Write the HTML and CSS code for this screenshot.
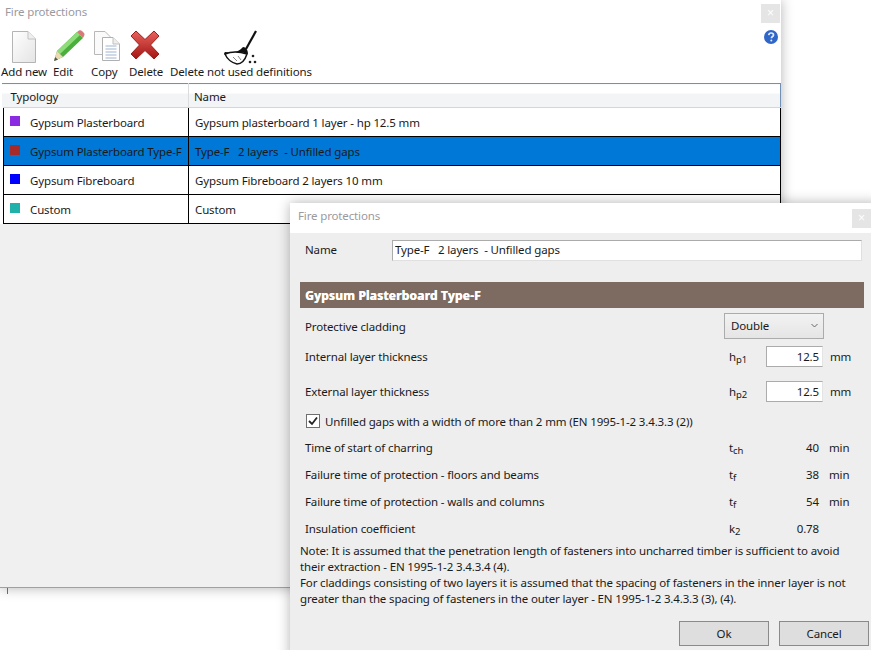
FILE: index.html
```html
<!DOCTYPE html>
<html lang="en">

<head>
    <meta charset="UTF-8">
    <title>Fire protections</title>
    <link rel="stylesheet" href="styles.css">
</head>

<body>

    <!-- main window -->
    <div class="window main-window">
        <div class="titlebar main-title">
            <span>Fire protections</span>
            <button class="close">×</button>
        </div>

        <div class="toolbar">
            <div class="tool tool-add">
                <svg width="26" height="34" viewBox="0 0 26 34">
                    <defs>
                        <linearGradient id="paper" x1="0" y1="0" x2="1" y2="1">
                            <stop offset="0" stop-color="#ffffff" />
                            <stop offset="1" stop-color="#e4e4e4" />
                        </linearGradient>
                    </defs>
                    <path d="M1.5 1.5H17L24.5 9V32.5H1.5Z" fill="url(#paper)" stroke="#b5b5b5" />
                    <path d="M17 1.5V9H24.5" fill="#efefef" stroke="#c2c2c2" />
                </svg>
                <span>Add new</span>
            </div>
            <div class="tool tool-edit">
                <svg width="32" height="32" viewBox="0 0 32 32">
                    <path d="M1 31L4 21L24 2L30 8L10 27Z" fill="#4cae3c" />
                    <path d="M4 21L24 2L27 5L7 24Z" fill="#8fdc7a" />
                    <path d="M24 2L26 0.5C27 0 28 0 29 1L31 3C31.7 4 31.6 5 31 6L30 8Z" fill="#d87a78" />
                    <path d="M1 31L4 21L10 27Z" fill="#ecd9b4" />
                    <path d="M1 31L2.2 27L5 29.8Z" fill="#555" />
                </svg>
                <span>Edit</span>
            </div>
            <div class="tool tool-copy">
                <svg width="28" height="32" viewBox="0 0 28 32">
                    <path d="M1.5 1.5H12L17 6.5V24.5H1.5Z" fill="#fafafa" stroke="#b8b8b8" />
                    <path d="M9.5 7.5H20L26.5 14V30.5H9.5Z" fill="#fff" stroke="#b0b0b0" />
                    <path d="M20 7.5V14H26.5" fill="#eee" stroke="#c0c0c0" />
                    <path d="M12.5 16H23.5M12.5 19H23.5M12.5 22H23.5M12.5 25H23.5M12.5 28H23.5" stroke="#9fb4d2" />
                </svg>
                <span>Copy</span>
            </div>
            <div class="tool tool-delete">
                <svg width="30" height="30" viewBox="0 0 30 30">
                    <defs>
                        <linearGradient id="red" x1="0" y1="0" x2="0" y2="1">
                            <stop offset="0" stop-color="#e8625e" />
                            <stop offset="1" stop-color="#a31512" />
                        </linearGradient>
                    </defs>
                    <path d="M1 6L6 1L15 9.500L24 1L29 6L20.500 15L29 24L24 29L15 20.500L6 29L1 24L9.500 15L1 6Z" fill="url(#red)" stroke="#9c1f1c" />
                </svg>
                <span>Delete</span>
            </div>
            <div class="tool tool-clean">
                <svg width="36" height="36" viewBox="0 0 36 36">
                    <path d="M33 1L23 19" stroke="#111" stroke-width="2.200" />
                    <path d="M20 17C23 17 25 20 25 24C18 22 10 22 2 25C1 24 1 23 2 22C9 23 16 22 20 17Z" fill="#111" />
                    <path d="M2 24C9 21 18 22 24 24C22 30 18 34 14 34C9 33 4 29 2 24Z" fill="#fff" stroke="#111" stroke-width="1.500" />
                    <path d="M10 27L14 31M15 26L18 30" stroke="#888" />
                    <circle cx="30" cy="26" r="1.300" fill="#222" />
                    <circle cx="27" cy="32" r="1.300" fill="#222" />
                    <circle cx="32" cy="32" r="1.300" fill="#222" />
                </svg>
                <span>Delete not used definitions</span>
            </div>
            <svg class="help" width="14" height="14" viewBox="0 0 14 14">
                <circle cx="7" cy="7" r="7" fill="#2f66c8" />
                <path d="M4.700 5.200C4.900 3.700 5.900 3 7.100 3C8.500 3 9.500 3.800 9.500 5C9.500 6.500 7.400 6.600 7.400 8.200" fill="none" stroke="#e4edf9" stroke-width="1.700" />
                <circle cx="7.300" cy="10.600" r="1" fill="#e4edf9" />
            </svg>
        </div>

        <table class="grid">
            <thead>
                <tr>
                    <th class="col-type">Typology</th>
                    <th>Name</th>
                </tr>
            </thead>
            <tbody>
                <tr>
                    <td><i class="swatch purple"></i>Gypsum Plasterboard</td>
                    <td>Gypsum plasterboard 1 layer - hp 12.5 mm</td>
                </tr>
                <tr class="selected">
                    <td><i class="swatch brown"></i>Gypsum Plasterboard Type-F</td>
                    <td>Type-F &nbsp; 2 layers &nbsp;- Unfilled gaps</td>
                </tr>
                <tr>
                    <td><i class="swatch blue"></i>Gypsum Fibreboard</td>
                    <td>Gypsum Fibreboard 2 layers 10 mm</td>
                </tr>
                <tr>
                    <td><i class="swatch teal"></i>Custom</td>
                    <td>Custom</td>
                </tr>
            </tbody>
        </table>
    </div>
    <div class="stray-tick"></div>

    <!-- dialog on top -->
    <div class="window dialog">
        <div class="titlebar dialog-title">
            <span>Fire protections</span>
            <button class="close">×</button>
        </div>

        <div class="dialog-body">
            <div class="name-row">
                <label>Name</label>
                <input class="name-input" type="text" value="Type-F   2 layers  - Unfilled gaps">
            </div>

            <div class="band">Gypsum Plasterboard Type-F</div>

            <div class="form-row row-cladding">
                <span class="row-label">Protective cladding</span>
                <div class="select">Double
                    <svg width="7" height="5" viewBox="0 0 7 5"><path d="M0.500 1L3.500 4L6.500 1" fill="none" stroke="#666" /></svg>
                </div>
            </div>
            <div class="form-row row-thick">
                <span class="row-label">Internal layer thickness</span>
                <span class="symbol">h<sub>p1</sub></span>
                <input class="num" type="text" value="12.5">
                <span class="unit">mm</span>
            </div>
            <div class="form-row row-thick2">
                <span class="row-label">External layer thickness</span>
                <span class="symbol">h<sub>p2</sub></span>
                <input class="num" type="text" value="12.5">
                <span class="unit">mm</span>
            </div>

            <div class="check-row">
                <svg class="check" width="14" height="14" viewBox="0 0 14 14">
                    <rect x="0.500" y="0.500" width="13" height="13" fill="#fff" stroke="#6f6f6f" />
                    <path d="M3 7L6 10L11 3.500" fill="none" stroke="#222" stroke-width="1.800" />
                </svg>
                <span>Unfilled gaps with a width of more than 2 mm (EN 1995-1-2 3.4.3.3 (2))</span>
            </div>

            <div class="form-row result">
                <span class="row-label">Time of start of charring</span>
                <span class="symbol">t<sub>ch</sub></span>
                <span class="value">40</span>
                <span class="unit">min</span>
            </div>
            <div class="form-row result">
                <span class="row-label">Failure time of protection - floors and beams</span>
                <span class="symbol">t<sub>f</sub></span>
                <span class="value">38</span>
                <span class="unit">min</span>
            </div>
            <div class="form-row result">
                <span class="row-label">Failure time of protection - walls and columns</span>
                <span class="symbol">t<sub>f</sub></span>
                <span class="value">54</span>
                <span class="unit">min</span>
            </div>
            <div class="form-row result">
                <span class="row-label">Insulation coefficient</span>
                <span class="symbol">k<sub>2</sub></span>
                <span class="value">0.78</span>
            </div>

            <p class="note">Note: It is assumed that the penetration length of fasteners into uncharred timber is sufficient to avoid<br>their extraction - EN 1995-1-2 3.4.3.4 (4).<br>For claddings consisting of two layers it is assumed that the spacing of fasteners in the inner layer is not<br>greater than the spacing of fasteners in the outer layer - EN 1995-1-2 3.4.3.3 (3), (4).</p>

            <div class="actions">
                <button class="btn">Ok</button>
                <button class="btn">Cancel</button>
            </div>
        </div>
    </div>

</body>

</html>
```

FILE: styles.css
```css
* {
    box-sizing: border-box;
}

html,
body {
    margin: 0;
    height: 650px;
    overflow: hidden;
    background-color: #fff;
}

body {
    position: relative;
    font-family: "Noto Sans", sans-serif;
    font-size: 11.5px;
    letter-spacing: -0.14px;
    color: #1a1a1a;
}

.window {
    position: absolute;
    box-shadow: 0 0 12px rgba(0, 0, 0, 0.3);
}

.main-window {
    left: 0;
    top: 0;
    width: 781px;
    height: 588px;
    background-color: #f0f0f0;
    border-bottom: 1px solid #8ea3bd;
}

.dialog {
    left: 290px;
    top: 203px;
    width: 590px;
    height: 460px;
    background-color: #eeeeee;
}

.stray-tick {
    position: absolute;
    left: 7px;
    top: 588px;
    width: 1px;
    height: 6px;
    background-color: #3c8c3c;
}

.titlebar {
    display: flex;
    justify-content: space-between;
    background-color: #fff;
    color: #9a9a9f;
}

.main-title {
    height: 24px;
    padding: 4px 1px 0 5px;
}

.dialog-title {
    height: 30px;
    padding: 5px 9px 0 8px;
}

.dialog-title .close {
    margin-top: 1px;
}

.close {
    width: 19px;
    height: 19px;
    padding: 0;
    border: none;
    background-color: #e5e5e5;
    color: #fff;
    font-size: 12px;
    line-height: 19px;
}

.toolbar {
    position: relative;
    display: flex;
    height: 59px;
    background-color: #fff;
}

.tool {
    display: flex;
    flex-direction: column;
    align-items: center;
    height: 59px;
    padding-top: 6px;
    white-space: nowrap;
}

.tool svg {
    display: block;
}

.tool span {
    position: absolute;
    top: 40px;
}

.tool-add {
    width: 48px;
}

.tool-edit {
    width: 43px;
    align-items: flex-start;
    padding-left: 5px;
}

.tool-edit span {
    left: 53px;
}

.tool-copy {
    width: 38px;
    align-items: flex-start;
    padding-left: 2px;
}

.tool-copy span {
    left: 91px;
}

.tool-delete {
    width: 32px;
}

.tool-clean {
    width: 160px;
}

.tool-add span {
    left: 1px;
}

.tool-delete span {
    left: 129px;
}

.tool-clean span {
    left: 170px;
}

.help {
    position: absolute;
    left: 764px;
    top: 6px;
}

.grid {
    width: 781px;
    border-collapse: collapse;
    table-layout: fixed;
    background-color: #fff;
}

.grid th {
    height: 24px;
    padding: 1px 5px 0;
    border-top: 1px solid #7091b5;
    border-bottom: 1px solid #d5d5d5;
    border-right: 1px solid #dcdcdc;
    background: linear-gradient(#fff 40%, #f3f4f6 41%);
    font-weight: normal;
    text-align: left;
}

.grid th:last-child {
    border-right: 1px solid #7091b5;
}

.col-type {
    width: 187px;
    padding-left: 9px !important;
}

.grid td {
    height: 29px;
    padding: 0 5px 0 6px;
    border-bottom: 1px solid #000;
    border-right: 1px solid #000;
    white-space: nowrap;
}

.grid td:first-child {
    padding-left: 27px;
    border-left: 3px solid #fff;
    box-shadow: inset 1px 0 0 #000;
    position: relative;
}

.selected td {
    background-color: #0078d7;
}

.swatch {
    position: absolute;
    left: 7px;
    top: 8px;
    width: 10px;
    height: 10px;
}

.purple {
    background-color: #8a2be2;
}

.brown {
    background-color: #a52a2a;
}

.blue {
    background-color: #0000ff;
}

.teal {
    background-color: #20b2aa;
}

.dialog-body {
    padding: 6px 0 0 10px;
    width: 581px;
}

.name-row {
    display: flex;
    align-items: center;
    height: 22px;
}

.name-row label {
    width: 92px;
    padding: 0 0 2px 5px;
}

.name-input {
    width: 470px;
    height: 21px;
    padding: 0 2px 2px;
    border: 1px solid #ababab;
    border-right-color: #e0e0e0;
    border-bottom-color: #e0e0e0;
    font: inherit;
    letter-spacing: inherit;
    color: inherit;
    white-space: pre;
}

.band {
    width: 564px;
    height: 26px;
    margin-top: 21px;
    padding: 5px 0 0 5px;
    background-color: #7d6a60;
    color: #fff;
    font-size: 12px;
    font-weight: bold;
    letter-spacing: 0.2px;
    text-shadow: 0.5px 0 0 #fff;
}

.form-row {
    display: flex;
    align-items: center;
    padding-left: 5px;
}

.row-cladding {
    height: 25px;
    margin-top: 5px;
}

.row-cladding .row-label {
    padding-top: 1px;
}

.row-thick {
    height: 21px;
    margin-top: 8px;
}

.row-thick2 {
    height: 21px;
    margin-top: 14px;
}

.row-label {
    width: 424px;
}

.select {
    display: flex;
    align-items: center;
    justify-content: space-between;
    width: 100px;
    height: 26px;
    margin-left: -5px;
    padding: 0 5px 0 6px;
    border: 1px solid #ababab;
    background: linear-gradient(#f2f2f2, #e5e5e5);
}

.symbol {
    width: 37px;
}

.symbol sub {
    font-size: 9.5px;
    line-height: 0;
    vertical-align: -2px;
}

.num {
    width: 57px;
    height: 21px;
    padding: 0 3px 0 0;
    border: 1px solid #ababab;
    border-right-color: #e4e4e4;
    font: inherit;
    letter-spacing: inherit;
    color: inherit;
    text-align: right;
}

.unit {
    margin-left: 7px;
}

.value {
    width: 53px;
    text-align: right;
}

.result .unit {
    margin-left: 10px;
}

.result {
    height: 27px;
}

.check-row {
    display: flex;
    align-items: center;
    gap: 5px;
    height: 20px;
    margin-top: 9px;
    margin-bottom: 3px;
    padding-left: 6px;
}

.note {
    margin: 1px 0 0;
    line-height: 16px;
}

.actions {
    display: flex;
    justify-content: flex-end;
    gap: 10px;
    margin-top: 14px;
    padding-right: 2px;
}

.btn {
    width: 90px;
    height: 25px;
    padding: 0;
    border: 1px solid #8a8a8a;
    background-color: #dedede;
    font: inherit;
    letter-spacing: inherit;
    color: inherit;
}
```
